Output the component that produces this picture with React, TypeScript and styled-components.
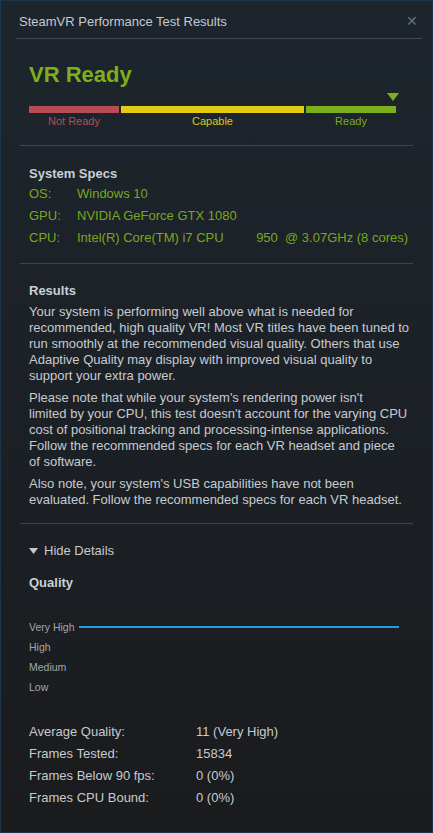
import React from "react";
import styled, { createGlobalStyle } from "styled-components";

const GlobalStyle = createGlobalStyle`
  html, body {
    margin: 0;
    padding: 0;
    background: #1b1d1f;
  }
  * {
    box-sizing: border-box;
  }
`;

const Window = styled.div`
  width: 433px;
  height: 833px;
  border: 1px solid #1d3548;
  background: linear-gradient(180deg, #1d252c 0%, #1c2127 45%, #1a1b1d 100%);
  font-family: "Liberation Sans", Arial, sans-serif;
  color: #c6cbd0;
  overflow: hidden;
`;

const TitleBar = styled.div`
  height: 37px;
  display: flex;
  align-items: center;
  justify-content: space-between;
  padding: 3px 14px 0 18px;
`;

const Title = styled.div`
  font-size: 13px;
  color: #c3cad1;
`;

const Close = styled.div`
  font-size: 14px;
  color: #6a7075;
  line-height: 1;
`;

const TitleRule = styled.div`
  height: 1px;
  margin: 0 10px 0 15px;
  background: #43484d;
`;

const Content = styled.div`
  padding: 0 19px;
`;

const Rule = styled.div`
  height: 1px;
  background: #3f4449;
`;

const Section = styled.div<{ $top: number; $bottom: number }>`
  padding: ${(p) => p.$top}px 0 ${(p) => p.$bottom}px 9px;
`;

const Status = styled.div`
  font-size: 22px;
  font-weight: bold;
  line-height: 26px;
  color: #7fae1c;
`;

const Indicator = styled.div`
  display: flex;
  justify-content: flex-end;
  width: 370px;
  margin-top: 5px;
`;

const Meter = styled.div`
  display: grid;
  grid-template-columns: 90px 183px 90px;
  column-gap: 2px;
  margin-top: 5px;
`;

const Segment = styled.div`
  display: flex;
  flex-direction: column;
  align-items: center;
`;

const Bar = styled.div<{ $color: string }>`
  width: 100%;
  height: 7px;
  background: ${(p) => p.$color};
`;

const BarLabel = styled.div<{ $color: string }>`
  font-size: 11px;
  line-height: 15px;
  margin-top: 1px;
  color: ${(p) => p.$color};
`;

const Heading = styled.div<{ $gap?: number }>`
  margin-top: ${(p) => p.$gap ?? 0}px;
  font-size: 13px;
  font-weight: bold;
  line-height: 18px;
  color: #c8d0d8;
`;

const SpecRow = styled.div`
  display: flex;
  font-size: 13px;
  line-height: 22px;
  color: #78a81b;
  white-space: pre;
`;

const SpecLabel = styled.div`
  width: 48px;
`;

const Para = styled.p`
  margin: 4px 0 0;
  font-size: 13px;
  line-height: 16px;
  white-space: nowrap;
  color: #c6cbd0;
  & + & {
    margin-top: 6px;
  }
`;

const Toggle = styled.div`
  display: flex;
  align-items: center;
  gap: 6px;
  font-size: 13px;
  line-height: 18px;
  color: #c6cbd0;
`;

const Chart = styled.div`
  margin-top: 25px;
  display: flex;
  flex-direction: column;
`;

const ChartRow = styled.div`
  display: flex;
  align-items: center;
  height: 20px;
  font-size: 10.5px;
  color: #a3a7ab;
`;

const Trace = styled.div`
  flex: 1;
  height: 2px;
  margin: 0 14px 0 4px;
  background: #1b9fe2;
`;

const Stats = styled.div`
  margin-top: 23px;
  display: grid;
  grid-template-columns: 167px 1fr;
  grid-auto-rows: 22px;
  align-items: center;
  font-size: 13px;
  color: #c6cbd0;
`;

const segments = [
  { label: "Not Ready", bar: "#b84b55", text: "#b84b55" },
  { label: "Capable", bar: "#e2cb12", text: "#d9c918" },
  { label: "Ready", bar: "#7aae1b", text: "#7aae1b" },
];

const specs = [
  ["OS:", "Windows 10"],
  ["GPU:", "NVIDIA GeForce GTX 1080"],
  ["CPU:", "Intel(R) Core(TM) i7 CPU         950  @ 3.07GHz (8 cores)"],
];

const results = [
  [
    "Your system is performing well above what is needed for",
    "recommended, high quality VR! Most VR titles have been tuned to",
    "run smoothly at the recommended visual quality. Others that use",
    "Adaptive Quality may display with improved visual quality to",
    "support your extra power.",
  ],
  [
    "Please note that while your system's rendering power isn't",
    "limited by your CPU, this test doesn't account for the varying CPU",
    "cost of positional tracking and processing-intense applications.",
    "Follow the recommended specs for each VR headset and piece",
    "of software.",
  ],
  [
    "Also note, your system's USB capabilities have not been",
    "evaluated. Follow the recommended specs for each VR headset.",
  ],
];

const stats = [
  ["Average Quality:", "11 (Very High)"],
  ["Frames Tested:", "15834"],
  ["Frames Below 90 fps:", "0 (0%)"],
  ["Frames CPU Bound:", "0 (0%)"],
];

const App = () => {
  return (
    <>
      <GlobalStyle />
      <Window>
        <TitleBar>
          <Title>SteamVR Performance Test Results</Title>
          <Close>✕</Close>
        </TitleBar>
        <TitleRule />
        <Content>
          <Section $top={23} $bottom={16}>
            <Status>VR Ready</Status>
            <Indicator>
              <svg width="12" height="8" viewBox="0 0 12 8">
                <polygon points="0,0 12,0 6,8" fill="#7fae1c" />
              </svg>
            </Indicator>
            <Meter>
              {segments.map((s) => (
                <Segment key={s.label}>
                  <Bar $color={s.bar} />
                  <BarLabel $color={s.text}>{s.label}</BarLabel>
                </Segment>
              ))}
            </Meter>
          </Section>
          <Rule />
          <Section $top={19} $bottom={14}>
            <Heading>System Specs</Heading>
            {specs.map(([k, v]) => (
              <SpecRow key={k}>
                <SpecLabel>{k}</SpecLabel>
                <div>{v}</div>
              </SpecRow>
            ))}
          </Section>
          <Rule />
          <Section $top={18} $bottom={15}>
            <Heading>Results</Heading>
            {results.map((lines, i) => (
              <Para key={i}>
                {lines.map((line, j) => (
                  <React.Fragment key={j}>
                    {j > 0 && <br />}
                    {line}
                  </React.Fragment>
                ))}
              </Para>
            ))}
          </Section>
          <Rule />
          <Section $top={18} $bottom={0}>
            <Toggle>
              <svg width="9" height="6" viewBox="0 0 9 6">
                <polygon points="0,0 9,0 4.5,6" fill="#c6cbd0" />
              </svg>
              Hide Details
            </Toggle>
            <Heading $gap={14}>Quality</Heading>
            <Chart>
              <ChartRow>
                Very High
                <Trace />
              </ChartRow>
              <ChartRow>High</ChartRow>
              <ChartRow>Medium</ChartRow>
              <ChartRow>Low</ChartRow>
            </Chart>
            <Stats>
              {stats.map(([k, v]) => (
                <React.Fragment key={k}>
                  <div>{k}</div>
                  <div>{v}</div>
                </React.Fragment>
              ))}
            </Stats>
          </Section>
        </Content>
      </Window>
    </>
  );
};

export default App;
